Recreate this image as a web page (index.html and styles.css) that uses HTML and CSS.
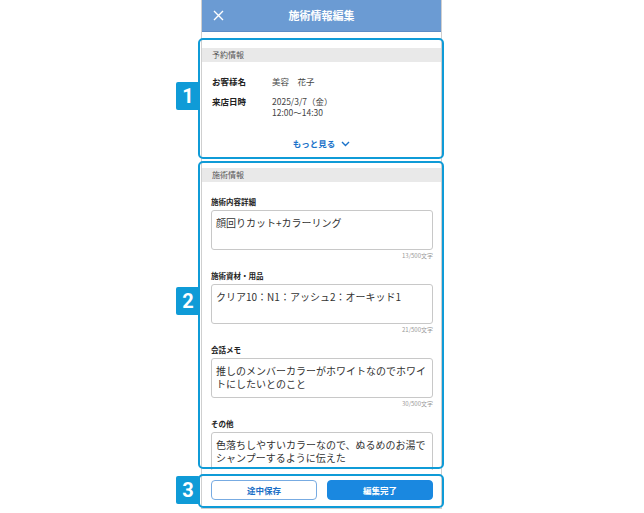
FILE: index.html
```html
<!DOCTYPE html>
<html lang="ja">
<head>
    <meta charset="UTF-8">
    <meta name="viewport" content="width=device-width, initial-scale=1.0">
    <title>施術情報編集</title>
    <link rel="stylesheet" href="styles.css">
</head>
<body>
    <div class="stage">
        <div class="phone">
            <!-- ヘッダー -->
            <div class="header">
                <svg class="close-icon" width="11" height="11" viewBox="0 0 11 11">
                    <path d="M1 1 L10 10 M10 1 L1 10" stroke="#fff" stroke-width="1.4" fill="none"/>
                </svg>
                <div class="header-title">施術情報編集</div>
                <span></span>
            </div>

            <div class="content">
                <!-- 予約情報 -->
                <div class="section">
                    <div class="section-title">予約情報</div>
                    <div class="rows">
                        <div class="row">
                            <div class="row-label">お客様名</div>
                            <div class="row-value">美容　花子</div>
                        </div>
                        <div class="row">
                            <div class="row-label">来店日時</div>
                            <div class="row-value">2025/3/7（金）<br>12:00〜14:30</div>
                        </div>
                    </div>
                    <div class="more">
                        もっと見る
                        <svg width="9" height="6" viewBox="0 0 9 6">
                            <path d="M1 1 L4.5 4.5 L8 1" stroke="#1a72c9" stroke-width="1.4" fill="none"/>
                        </svg>
                    </div>
                </div>

                <!-- 施術情報 -->
                <div class="section section-work">
                    <div class="section-title">施術情報</div>
                    <div class="fields">
                        <div class="field">
                            <div class="field-label">施術内容詳細</div>
                            <div class="field-box">顔回りカット+カラーリング</div>
                            <div class="field-count">13/500文字</div>
                        </div>
                        <div class="field">
                            <div class="field-label">施術資材・用品</div>
                            <div class="field-box">クリア10：N1：アッシュ2：オーキッド1</div>
                            <div class="field-count">21/500文字</div>
                        </div>
                        <div class="field">
                            <div class="field-label">会話メモ</div>
                            <div class="field-box">推しのメンバーカラーがホワイトなのでホワイトにしたいとのこと</div>
                            <div class="field-count">30/500文字</div>
                        </div>
                        <div class="field">
                            <div class="field-label">その他</div>
                            <div class="field-box">色落ちしやすいカラーなので、ぬるめのお湯でシャンプーするように伝えた</div>
                        </div>
                    </div>
                </div>
            </div>

            <!-- フッター -->
            <div class="footer">
                <button class="btn btn-outline">途中保存</button>
                <button class="btn btn-primary">編集完了</button>
            </div>
        </div>

        <!-- 注釈 -->
        <div class="note-box note-1"></div>
        <div class="note-box note-2"></div>
        <div class="note-box note-3"></div>
        <div class="badge badge-1">1</div>
        <div class="badge badge-2">2</div>
        <div class="badge badge-3">3</div>
    </div>
</body>
</html>
```

FILE: styles.css
```css
/* 基本 */
body {
    margin: 0;
    background-color: #ffffff;
    font-family: "Noto Sans CJK JP", "Noto Sans", sans-serif;
    color: #333;
}

.stage {
    position: relative;
    width: 644px;
    height: 513px;
    padding-left: 201px;
    box-sizing: border-box;
    overflow: hidden;
}

.phone {
    width: 241px;
    height: 509px;
    border: 1px solid #cfcfcf;
    border-top: none;
    box-sizing: border-box;
    display: flex;
    flex-direction: column;
    background-color: #fff;
}

/* ヘッダー */
.header {
    height: 32px;
    flex-shrink: 0;
    background-color: #6b9bd3;
    border-bottom: 1px solid #5c8cc6;
    box-sizing: border-box;
    display: grid;
    grid-template-columns: 30px 1fr 30px;
    align-items: center;
}

.close-icon {
    margin-left: 11px;
}

.header-title {
    text-align: center;
    color: #fff;
    font-size: 11px;
    font-weight: bold;
    line-height: 1;
}

/* コンテンツ */
.content {
    flex: 1;
    overflow: hidden;
    padding-top: 16px;
}

.section-title {
    height: 14px;
    line-height: 14px;
    background-color: #e9e9e9;
    font-size: 8px;
    color: #555;
    padding-left: 10px;
}

.rows {
    padding: 14px 10px 0;
}

.row {
    display: grid;
    grid-template-columns: 60px 1fr;
    font-size: 8.5px;
    line-height: 11px;
    margin-bottom: 9px;
}

.row-label {
    font-weight: bold;
    color: #222;
}

.row-value {
    color: #444;
}

.more {
    margin-top: 20px;
    display: flex;
    justify-content: center;
    align-items: center;
    gap: 6px;
    font-size: 8.5px;
    line-height: 11px;
    font-weight: bold;
    color: #1a72c9;
}

.section-work {
    margin-top: 19px;
}

/* 入力欄 */
.fields {
    padding: 15px 8px 0 9px;
}

.field {
    margin-bottom: 11px;
}

.field-label {
    font-size: 7.5px;
    line-height: 10px;
    font-weight: bold;
    color: #222;
    margin-bottom: 3px;
}

.field-box {
    height: 40px;
    box-sizing: border-box;
    border: 1px solid #c8c8c8;
    border-radius: 3px;
    padding: 5px 1px 0 4px;
    font-size: 10px;
    line-height: 13px;
    color: #333;
    overflow: hidden;
}

.field-count {
    text-align: right;
    font-size: 6px;
    line-height: 8px;
    color: #999;
    margin-top: 2px;
}

/* フッター */
.footer {
    height: 38px;
    flex-shrink: 0;
    box-sizing: border-box;
    padding: 10px 8px 0 9px;
    display: flex;
    gap: 10px;
}

.btn {
    flex: 1;
    height: 20px;
    border-radius: 4px;
    font-family: inherit;
    font-size: 8.5px;
    font-weight: bold;
    padding: 0;
}

.btn-outline {
    background-color: #fff;
    border: 1px solid #77abe2;
    color: #1b6fc6;
}

.btn-primary {
    background-color: #1a88e0;
    border: 1px solid #1a88e0;
    color: #fff;
}

/* 注釈 */
.note-box {
    position: absolute;
    left: 198px;
    width: 246px;
    border: 2px solid #0f9bd7;
    border-radius: 5px;
    box-sizing: border-box;
}

.note-1 { top: 38px; height: 121px; }
.note-2 { top: 161px; height: 308px; }
.note-3 { top: 474px; height: 34px; }

.badge {
    position: absolute;
    left: 176px;
    width: 24px;
    height: 28px;
    background-color: #0f9bd7;
    border-radius: 2px;
    color: #fff;
    font-family: Roboto, "Liberation Sans", sans-serif;
    font-size: 20px;
    font-weight: bold;
    line-height: 28px;
    text-align: center;
}

.badge-1 { top: 82px; }
.badge-2 { top: 287px; }
.badge-3 { top: 476px; }
```
